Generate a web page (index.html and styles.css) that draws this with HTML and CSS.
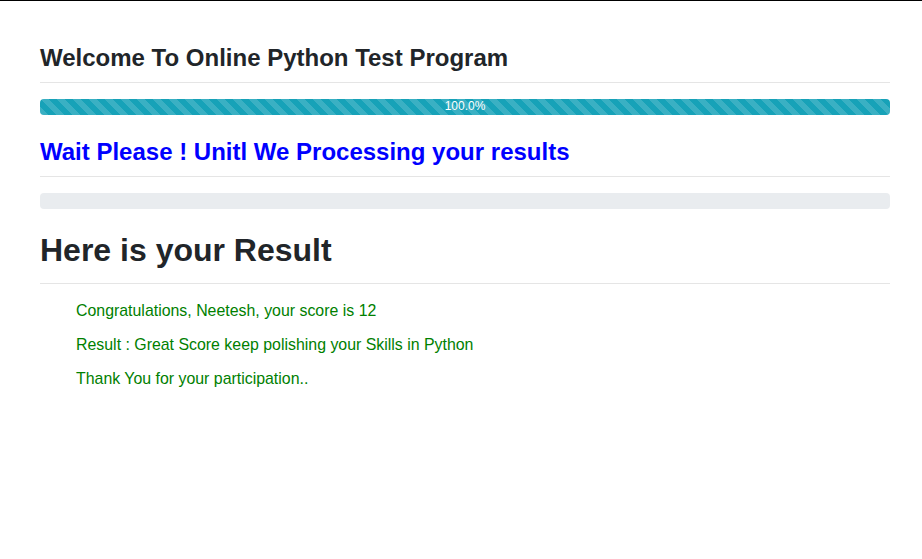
FILE: index.html
```html
<!DOCTYPE html>
<html lang="en">
<head>
<meta charset="utf-8">
<title>Online Python Test</title>
<link rel="stylesheet" href="styles.css">
</head>
<body>
<div class="container">
  <h4 class="title">Welcome To Online Python Test Program</h4>
  <hr class="rule">
  <div class="progress">
    <div class="progress-bar striped" style="width: 100%">100.0%</div>
  </div>
  <h4 class="title wait">Wait Please ! Unitl We Processing your results</h4>
  <hr class="rule">
  <div class="progress"></div>
  <h2 class="result-title">Here is your Result</h2>
  <hr class="rule rule-result">
  <div class="result-lines">
    <p class="line">Congratulations, Neetesh, your score is 12</p>
    <p class="line">Result : Great Score keep polishing your Skills in Python</p>
    <p class="line">Thank You for your participation..</p>
  </div>
</div>
</body>
</html>
```

FILE: styles.css
```css
html, body {
  margin: 0;
  padding: 0;
}
body {
  font-family: "Liberation Sans", Arial, Helvetica, sans-serif;
  color: #212529;
  background: #fff;
  border-top: 1px solid #000;
  font-size: 16px;
}
.container {
  padding: 43px 32px 0 40px;
}
.title {
  font-size: 24px;
  font-weight: 700;
  line-height: 28.8px;
  margin: 0 0 9px 0;
}
.wait {
  color: #0000ff;
  margin-top: 23px;
}
.rule {
  border: 0;
  border-top: 1px solid rgba(0, 0, 0, 0.1);
  margin: 0 0 16px 0;
}
.progress {
  height: 16px;
  background: #e9ecef;
  border-radius: 4px;
  overflow: hidden;
  display: flex;
}
.progress-bar {
  background-color: #17a2b8;
  color: #fff;
  font-size: 12px;
  line-height: 14px;
  text-align: center;
}
.striped {
  background-image: linear-gradient(45deg, rgba(255,255,255,.15) 25%, transparent 25%, transparent 50%, rgba(255,255,255,.15) 50%, rgba(255,255,255,.15) 75%, transparent 75%, transparent);
  background-size: 16px 16px;
}
.result-title {
  font-size: 32px;
  font-weight: 700;
  line-height: 38.4px;
  margin: 22px 0 14px 0;
}
.rule-result {
  margin-bottom: 15px;
}
.result-lines {
  padding-left: 36px;
}
.line {
  color: #008000;
  margin: 0 0 10px 0;
  line-height: 24px;
  font-size: 15.9px;
}
```
